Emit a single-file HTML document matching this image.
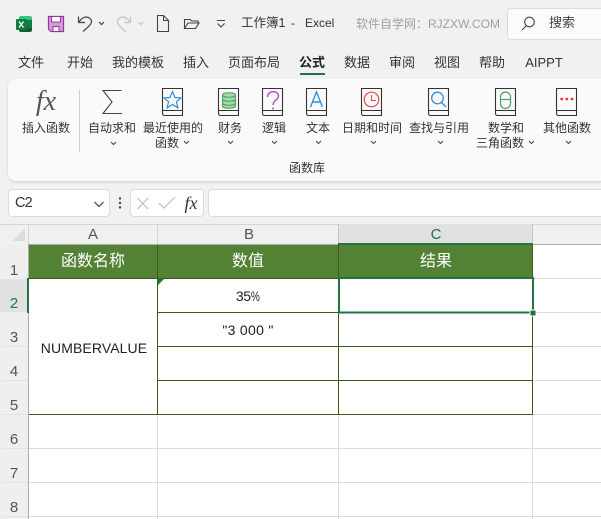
<!DOCTYPE html>
<html lang="zh"><head><meta charset="utf-8"><style>
html,body{margin:0;padding:0}
body{width:601px;height:519px;overflow:hidden;position:relative;background:#f0f1f1;font-family:"Liberation Sans","Noto Sans CJK SC",sans-serif;color:#333;font-size:12px}
.t{position:absolute;white-space:nowrap;line-height:16px;transform:translateX(-50%)}
.l{position:absolute;white-space:nowrap;line-height:16px}
.b{position:absolute}
.tab{font-size:13px;top:55px}
.ch{font-size:15px;top:227px;color:#555}
.rh{font-size:15px;left:14px;color:#555}
.hd{font-size:16px;top:254px;color:#fff}
svg{position:absolute;left:0;top:0}
</style></head><body>
<div class="b" style="left:8px;top:79px;width:600px;height:102px;background:#fafafa;border-radius:8px;box-shadow:0 1px 2px #ccc"></div>
<div class="b" style="left:507px;top:8px;width:100px;height:32px;background:#fbfbfb;border:1px solid #dcdcdc;border-radius:4px;box-sizing:border-box"></div>
<div class="b" style="left:8px;top:189px;width:102px;height:28px;background:#fff;border:1px solid #dcdcdc;border-radius:4px;box-sizing:border-box"></div>
<div class="b" style="left:130px;top:189px;width:74px;height:28px;background:#fff;border:1px solid #dcdcdc;border-radius:4px;box-sizing:border-box"></div>
<div class="b" style="left:208px;top:189px;width:400px;height:28px;background:#fff;border:1px solid #dcdcdc;border-radius:4px;box-sizing:border-box"></div>

<!-- sheet -->
<div class="b" style="left:0;top:224px;width:601px;height:1px;background:#d6d6d6"></div>
<div class="b" style="left:0;top:225px;width:601px;height:20px;background:#eff0f0"></div>
<div class="b" style="left:0;top:245px;width:28px;height:274px;background:#efefef"></div>
<div class="b" style="left:28px;top:245px;width:573px;height:274px;background:#fff"></div>
<div class="b" style="left:338px;top:224px;width:195px;height:21px;background:#e1e1e1"></div>
<div class="b" style="left:0;top:279px;width:28px;height:33px;background:#e1e1e1"></div>
<div class="b" style="left:29px;top:245px;width:504px;height:33px;background:#548235"></div>

<svg width="601" height="519" viewBox="0 0 601 519" fill="none" shape-rendering="crispEdges">
 <!-- header cell separators -->
 <path d="M157.500 225V245M28.500 225V245" stroke="#d4d4d4"/>
 <path d="M338.500 224V245M532.500 224V245" stroke="#c6c6c6"/>
 <path d="M28 244.500H338M533 244.500H601" stroke="#acacac"/>
 <path d="M28.500 245V519" stroke="#acacac"/>
 <!-- row header ticks -->
 <path d="M2 346.500H28M2 380.500H28M2 414.500H28M2 448.500H28M2 482.500H28M2 516.500H28" stroke="#e2e2e2"/>
 <!-- gridlines -->
 <path d="M533 278.500H601M533 312.500H601M533 346.500H601M533 380.500H601M533 414.500H601M29 448.500H601M29 482.500H601M29 516.500H601" stroke="#dcdcdc"/>
 <path d="M157.500 415V519M338.500 415V519M532.500 415V519" stroke="#dcdcdc"/>
 <!-- table borders -->
 <path d="M29 278.500H338M157 312.500H338M157 346.500H533M157 380.500H533M29 414.500H533M157.500 245V415M338.500 245V415M532.500 245V278M532.500 313V415" stroke="#3f5a20"/>
 <path d="M338 244H533" stroke="#217346" stroke-width="2"/>
 <path d="M28 278V313" stroke="#217346" stroke-width="2"/>
 <rect x="339" y="278" width="194" height="34.500" stroke="#217346" stroke-width="2"/>
 <rect x="530" y="310" width="6" height="6" fill="#217346" stroke="#fff" stroke-width="1"/>
 <g shape-rendering="auto">
 <path d="M158 279H164L158 285Z" fill="#1e7a1e"/>
 <!-- corner triangle -->
 <path d="M25 228V241H13Z" fill="#dcdcdc"/>

 <!-- excel logo -->
 <path d="M21 16h9a2 2 0 0 1 2 2v6H19v-6a2 2 0 0 1 2-2z" fill="#33c481"/>
 <path d="M19 24h13v4H19z" fill="#21a366"/>
 <path d="M25.500 20H32v8h-6.500z" fill="#107c41"/>
 <path d="M19 28h13v2a2 2 0 0 1-2 2H21a2 2 0 0 1-2-2z" fill="#185c37"/>
 <rect x="16" y="19" width="11" height="11" rx="1" fill="#107c41"/>
 <path d="M19 21.500l4.500 6M23.500 21.500l-4.500 6" stroke="#fff" stroke-width="1.300"/>

 <!-- save -->
 <path d="M48.500 16.500H63.500V31.500H51L48.500 29Z" fill="#d79ad8" stroke="#93359f" stroke-width="1.200"/>
 <rect x="51.500" y="16.500" width="9" height="5.500" fill="#fff" stroke="#93359f"/>
 <rect x="53" y="26.500" width="6" height="5" fill="#fff" stroke="#93359f"/>

 <!-- undo -->
 <path d="M78.500 16.500V22.500H85M79 22c2-3 4-5 7-5 3 0 5.500 2 5.500 4.500 0 3-4 6-8.500 10" stroke="#444" stroke-width="1.200"/>
 <path d="M99 22l2.500 2.500L104 22" stroke="#444" stroke-width="1.200"/>
 <!-- redo -->
 <path d="M130.500 16.500V22.500H124M130 22c-2-3-4-5-7-5-3 0-5.500 2-5.500 4.500 0 3 3 6 8 10" stroke="#c4c4c4" stroke-width="1.200"/>
 <path d="M138.500 22l2.500 2.500 2.500-2.500" stroke="#c4c4c4" stroke-width="1.200"/>
 <!-- new -->
 <path d="M157.500 15.500H163.500L168.500 20.500V31.500H157.500ZM163.500 15.500V20.500H168.500" stroke="#444" stroke-width="1.100"/>
 <!-- open -->
 <path d="M184.500 28.500V19.500H190L192 21H198V23M184.500 28.500H195.500L199 23H188L184.500 28.500Z" stroke="#444" stroke-width="1.100"/>
 <!-- qat more -->
 <path d="M217 20.500H225M217.500 23.500l3.500 3.500 3.500-3.500" stroke="#444" stroke-width="1.100"/>
 <!-- search -->
 <circle cx="529.500" cy="22" r="4.800" stroke="#444" stroke-width="1.100"/>
 <path d="M526.500 25.500l-4.500 4.500" stroke="#444" stroke-width="1.100"/>

 <!-- tab underline -->
 <rect x="300" y="73" width="25" height="2" fill="#217346"/>

 <!-- ribbon separator -->
 <path d="M79.500 90V152" stroke="#d0d0d0"/>
 <!-- sigma -->
 <path d="M121.500 90.500H103L112 102L103 113.500H122" stroke="#444" stroke-width="1.100"/>

 <!-- book icons -->
 <g stroke="#333" stroke-width="1.100" fill="#fafafa">
  <path d="M162.500 88.500H182.500V115.500H164.500Q162.500 115.500 162.500 113ZM162.500 110.500H182.500"/>
  <path d="M218.500 88.500H238.500V115.500H220.500Q218.500 115.500 218.500 113ZM218.500 110.500H238.500"/>
  <path d="M262.500 88.500H282.500V115.500H264.500Q262.500 115.500 262.500 113ZM262.500 110.500H282.500"/>
  <path d="M306.500 88.500H326.500V115.500H308.500Q306.500 115.500 306.500 113ZM306.500 110.500H326.500"/>
  <path d="M361.500 88.500H381.500V115.500H363.500Q361.500 115.500 361.500 113ZM361.500 110.500H381.500"/>
  <path d="M428.500 88.500H448.500V115.500H430.500Q428.500 115.500 428.500 113ZM428.500 110.500H448.500"/>
  <path d="M495.500 88.500H515.500V115.500H497.500Q495.500 115.500 495.500 113ZM495.500 110.500H515.500"/>
  <path d="M556.500 88.500H576.500V115.500H558.500Q556.500 115.500 556.500 113ZM556.500 110.500H576.500"/>
 </g>
 <!-- star -->
 <path d="M172.500 91.500l2.500 6 6 .4-4.600 3.900 1.500 6-5.400-3.300-5.400 3.300 1.500-6-4.600-3.900 6-.4z" stroke="#2f8fdc" stroke-width="1.200"/>
 <!-- db -->
 <g stroke="#4aa564" stroke-width="1.100" fill="#a6d9a8">
  <path d="M222.500 95c0-3 13-3 13 0V106c0 3-13 3-13 0Z"/>
  <path d="M222.500 95c0 3 13 3 13 0M222.500 99c0 3 13 3 13 0M222.500 103c0 3 13 3 13 0" fill="none"/>
 </g>
 <!-- ? -->
 <path d="M267.500 97c0-7 11-7 11-1 0 4-5.500 4-5.500 9" stroke="#b04fc4" stroke-width="1.400"/>
 <circle cx="273" cy="108.500" r="1" fill="#b04fc4"/>
 <!-- A -->
 <path d="M310.500 107L316.500 92L322.500 107M312.500 102H320.500" stroke="#2f8fdc" stroke-width="1.400"/>
 <!-- clock -->
 <circle cx="371.500" cy="99.500" r="7.300" stroke="#e94b4b" stroke-width="1.200"/>
 <path d="M371.500 95V100.500H376" stroke="#e94b4b" stroke-width="1.100"/>
 <!-- magnifier -->
 <circle cx="437.500" cy="98" r="5.800" stroke="#2f8fdc" stroke-width="1.300"/>
 <path d="M441.500 102.500l4.500 4.500" stroke="#2f8fdc" stroke-width="1.400"/>
 <!-- theta -->
 <rect x="500.500" y="92" width="10" height="16.500" rx="5" stroke="#4aa564" stroke-width="1.200"/>
 <path d="M501 99.500H510" stroke="#4aa564" stroke-width="1.200"/>
 <!-- dots -->
 <circle cx="561.700" cy="99" r="1.400" fill="#e33"/><circle cx="566.800" cy="99" r="1.400" fill="#e33"/><circle cx="572" cy="99" r="1.400" fill="#e33"/>

 <!-- chevrons -->
 <g stroke="#444" stroke-width="1">
  <path d="M111 142l2.500 2.500 2.500-2.500"/>
  <path d="M184 141l2.500 2.500 2.500-2.500"/>
  <path d="M228 141l2.500 2.500 2.500-2.500"/>
  <path d="M272 141l2.500 2.500 2.500-2.500"/>
  <path d="M316 141l2.500 2.500 2.500-2.500"/>
  <path d="M371 141l2.500 2.500 2.500-2.500"/>
  <path d="M438 141l2.500 2.500 2.500-2.500"/>
  <path d="M529 141l2.500 2.500 2.500-2.500"/>
  <path d="M566 141l2.500 2.500 2.500-2.500"/>
 </g>
 <!-- namebox chevron -->
 <path d="M94.500 202l4.500 4.500 4.500-4.500" stroke="#555" stroke-width="1.300"/>
 <!-- vertical dots -->
 <circle cx="120" cy="198.500" r="1.200" fill="#444"/><circle cx="120" cy="203" r="1.200" fill="#444"/><circle cx="120" cy="207.500" r="1.200" fill="#444"/>
 <!-- x / check -->
 <path d="M137.500 198l10.500 11M148 198l-10.500 11" stroke="#bdbdbd" stroke-width="1.200"/>
 <path d="M159 203l5 5 11-11" stroke="#bdbdbd" stroke-width="1.200"/>
 </g>
</svg>

<!-- fx -->
<div class="t" style="left:46px;top:87px;font:italic 28px/30px 'Liberation Serif',serif;color:#555">fx</div>
<div class="t" style="left:191px;top:193px;font:italic 18px/20px 'Liberation Serif',serif;color:#333">fx</div>

<!-- title -->
<div class="l" style="left:241px;top:15px;font-size:12.500px;color:#333">工作簿1</div>
<div class="l" style="left:291px;top:15px;font-size:12px;color:#333">-</div>
<div class="l" style="left:305px;top:15px;font-size:12px;color:#333">Excel</div>
<div class="l" style="left:356px;top:16px;font-size:12px;color:#a0a0a0">软件自学网：RJZXW.COM</div>
<div class="l" style="left:549px;top:15px;font-size:13px;color:#444">搜索</div>

<!-- tabs -->
<div class="t tab" style="left:31px">文件</div>
<div class="t tab" style="left:80px">开始</div>
<div class="t tab" style="left:138px">我的模板</div>
<div class="t tab" style="left:196px">插入</div>
<div class="t tab" style="left:254px">页面布局</div>
<div class="t tab" style="left:312px;font-weight:700;color:#222">公式</div>
<div class="t tab" style="left:357px">数据</div>
<div class="t tab" style="left:402px">审阅</div>
<div class="t tab" style="left:447px">视图</div>
<div class="t tab" style="left:492px">帮助</div>
<div class="t tab" style="left:544px">AIPPT</div>

<!-- ribbon labels -->
<div class="t" style="left:46px;top:120px">插入函数</div>
<div class="t" style="left:112px;top:120px">自动求和</div>
<div class="t" style="left:173px;top:120px">最近使用的</div>
<div class="t" style="left:167px;top:135px">函数</div>
<div class="t" style="left:230px;top:120px">财务</div>
<div class="t" style="left:274px;top:120px">逻辑</div>
<div class="t" style="left:318px;top:120px">文本</div>
<div class="t" style="left:372px;top:120px">日期和时间</div>
<div class="t" style="left:439px;top:120px">查找与引用</div>
<div class="t" style="left:506px;top:120px">数学和</div>
<div class="t" style="left:500px;top:135px">三角函数</div>
<div class="t" style="left:567px;top:120px">其他函数</div>
<div class="t" style="left:307px;top:160px">函数库</div>

<div class="l" style="left:15px;top:195px;font-size:14.500px;letter-spacing:-.8px;color:#333">C2</div>

<!-- col headers -->
<div class="t ch" style="left:93px">A</div>
<div class="t ch" style="left:249px">B</div>
<div class="t ch" style="left:436px;color:#217346">C</div>
<!-- row headers -->
<div class="t rh" style="top:263px">1</div>
<div class="t rh" style="top:296px;color:#217346">2</div>
<div class="t rh" style="top:330px">3</div>
<div class="t rh" style="top:364px">4</div>
<div class="t rh" style="top:398px">5</div>
<div class="t rh" style="top:432px">6</div>
<div class="t rh" style="top:466px">7</div>
<div class="t rh" style="top:500px">8</div>

<!-- cells -->
<div class="t hd" style="left:93px">函数名称</div>
<div class="t hd" style="left:248px">数值</div>
<div class="t hd" style="left:436px">结果</div>
<div class="t" style="left:94px;top:340px;font-size:14px;letter-spacing:.1px;color:#222">NUMBERVALUE</div>
<div class="t" style="left:248px;top:288px;font-size:14px;letter-spacing:-.4px;color:#222">35<span style="display:inline-block;transform:scaleX(.72);transform-origin:0 50%;width:9.500px">%</span></div>
<div class="t" style="left:248px;top:322px;font-size:14px;letter-spacing:.3px;color:#222">"3 000 "</div>
</body></html>
